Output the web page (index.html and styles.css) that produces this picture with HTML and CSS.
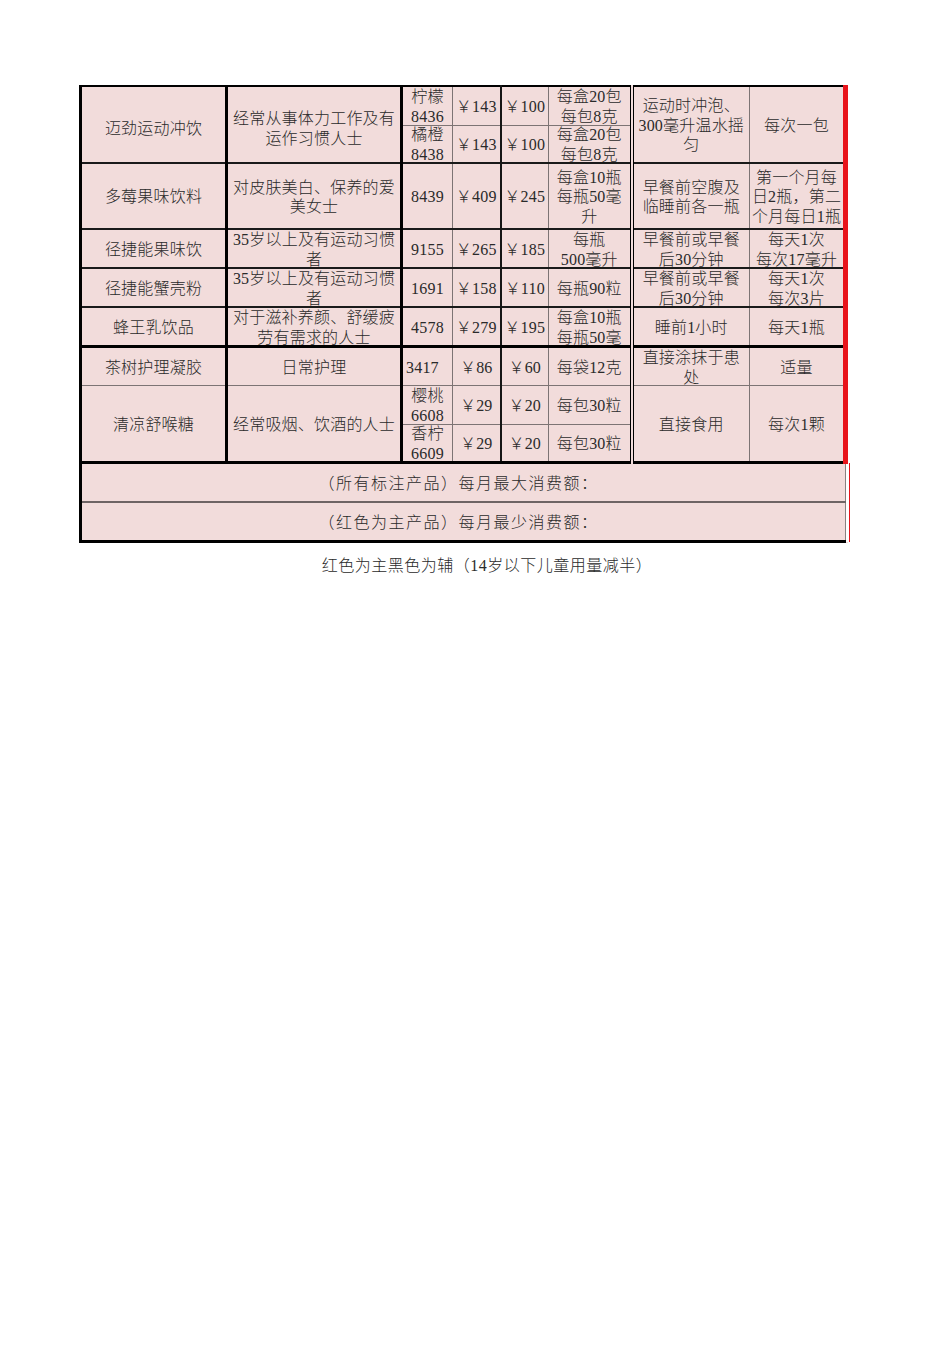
FILE: index.html
```html
<!DOCTYPE html>
<html lang="zh-CN">
<head>
<meta charset="utf-8">
<title>产品表</title>
<link rel="stylesheet" href="styles.css">
</head>
<body>
<div class="sheet">
  <table class="grid">
    <colgroup>
      <col class="w1"><col class="w2"><col class="w3"><col class="w4"><col class="w5"><col class="w6"><col class="w7"><col class="w8">
    </colgroup>
    <tbody>
      <tr class="r-first">
        <td rowspan="2" class="c1"><div class="cell h2 low">迈劲运动冲饮</div></td>
        <td rowspan="2" class="c2"><div class="cell h2 low">经常从事体力工作及有<br>运作习惯人士</div></td>
        <td class="c3"><div class="cell h1">柠檬<br>8436</div></td>
        <td class="c4"><div class="cell h1">￥143</div></td>
        <td class="c5"><div class="cell h1">￥100</div></td>
        <td class="c6"><div class="cell h1">每盒20包<br>每包8克</div></td>
        <td rowspan="2" class="c7"><div class="cell h2">运动时冲泡、<br>300毫升温水摇<br>匀</div></td>
        <td rowspan="2" class="c8"><div class="cell h2">每次一包</div></td>
      </tr>
      <tr class="r-sub">
        <td class="c3"><div class="cell h1b">橘橙<br>8438</div></td>
        <td class="c4"><div class="cell h1b">￥143</div></td>
        <td class="c5"><div class="cell h1b">￥100</div></td>
        <td class="c6"><div class="cell h1b">每盒20包<br>每包8克</div></td>
      </tr>
      <tr class="r-dark">
        <td class="c1"><div class="cell h3">多莓果味饮料</div></td>
        <td class="c2"><div class="cell h3">对皮肤美白、保养的爱<br>美女士</div></td>
        <td class="c3"><div class="cell h3">8439</div></td>
        <td class="c4"><div class="cell h3">￥409</div></td>
        <td class="c5"><div class="cell h3">￥245</div></td>
        <td class="c6"><div class="cell h3">每盒10瓶<br>每瓶50毫<br>升</div></td>
        <td class="c7"><div class="cell h3">早餐前空腹及<br>临睡前各一瓶</div></td>
        <td class="c8"><div class="cell h3">第一个月每<br>日2瓶，第二<br>个月每日1瓶</div></td>
      </tr>
      <tr class="r-dark">
        <td class="c1"><div class="cell h1">径捷能果味饮</div></td>
        <td class="c2"><div class="cell h1">35岁以上及有运动习惯<br>者</div></td>
        <td class="c3"><div class="cell h1">9155</div></td>
        <td class="c4"><div class="cell h1">￥265</div></td>
        <td class="c5"><div class="cell h1">￥185</div></td>
        <td class="c6"><div class="cell h1">每瓶<br>500毫升</div></td>
        <td class="c7"><div class="cell h1">早餐前或早餐<br>后30分钟</div></td>
        <td class="c8"><div class="cell h1">每天1次<br>每次17毫升</div></td>
      </tr>
      <tr class="r-dark">
        <td class="c1"><div class="cell h1">径捷能蟹壳粉</div></td>
        <td class="c2"><div class="cell h1">35岁以上及有运动习惯<br>者</div></td>
        <td class="c3"><div class="cell h1">1691</div></td>
        <td class="c4"><div class="cell h1">￥158</div></td>
        <td class="c5"><div class="cell h1">￥110</div></td>
        <td class="c6"><div class="cell h1">每瓶90粒</div></td>
        <td class="c7"><div class="cell h1">早餐前或早餐<br>后30分钟</div></td>
        <td class="c8"><div class="cell h1">每天1次<br>每次3片</div></td>
      </tr>
      <tr class="r-dark">
        <td class="c1"><div class="cell h1">蜂王乳饮品</div></td>
        <td class="c2"><div class="cell h1">对于滋补养颜、舒缓疲<br>劳有需求的人士</div></td>
        <td class="c3"><div class="cell h1">4578</div></td>
        <td class="c4"><div class="cell h1">￥279</div></td>
        <td class="c5"><div class="cell h1">￥195</div></td>
        <td class="c6"><div class="cell h1">每盒10瓶<br>每瓶50毫</div></td>
        <td class="c7"><div class="cell h1">睡前1小时</div></td>
        <td class="c8"><div class="cell h1">每天1瓶</div></td>
      </tr>
      <tr class="r-thick">
        <td class="c1"><div class="cell h1">茶树护理凝胶</div></td>
        <td class="c2"><div class="cell h1">日常护理</div></td>
        <td class="c3"><div class="cell h1 left">3417</div></td>
        <td class="c4"><div class="cell h1">￥86</div></td>
        <td class="c5"><div class="cell h1">￥60</div></td>
        <td class="c6"><div class="cell h1">每袋12克</div></td>
        <td class="c7"><div class="cell h1">直接涂抹于患<br>处</div></td>
        <td class="c8"><div class="cell h1">适量</div></td>
      </tr>
      <tr class="r-sub">
        <td rowspan="2" class="c1"><div class="cell h2">清凉舒喉糖</div></td>
        <td rowspan="2" class="c2"><div class="cell h2">经常吸烟、饮酒的人士</div></td>
        <td class="c3"><div class="cell h1">樱桃<br>6608</div></td>
        <td class="c4"><div class="cell h1">￥29</div></td>
        <td class="c5"><div class="cell h1">￥20</div></td>
        <td class="c6"><div class="cell h1">每包30粒</div></td>
        <td rowspan="2" class="c7"><div class="cell h2">直接食用</div></td>
        <td rowspan="2" class="c8"><div class="cell h2">每次1颗</div></td>
      </tr>
      <tr class="r-sub">
        <td class="c3"><div class="cell h1b">香柠<br>6609</div></td>
        <td class="c4"><div class="cell h1b">￥29</div></td>
        <td class="c5"><div class="cell h1b">￥20</div></td>
        <td class="c6"><div class="cell h1b">每包30粒</div></td>
      </tr>
      <tr class="r-total">
        <td colspan="8" class="sum"><div class="cell h1 wide">（所有标注产品）每月最大消费额：</div></td>
      </tr>
      <tr class="r-total2">
        <td colspan="8" class="sum"><div class="cell h1 wide">（红色为主产品）每月最少消费额：</div></td>
      </tr>
    </tbody>
  </table>
  <p class="note">红色为主黑色为辅（14岁以下儿童用量减半）</p>
</div>
</body>
</html>
```

FILE: styles.css
```css
html, body {
  margin: 0;
  padding: 0;
  background: #ffffff;
}

.sheet {
  padding: 85px 0 0 79px;
  font-family: "Liberation Serif", "Noto Sans CJK SC", serif;
  font-size: 16px;
  font-weight: 300;
  color: #2a2a2a;
  text-spacing-trim: space-all;
}

.grid {
  border-collapse: collapse;
  table-layout: fixed;
  background: #f2dcdb;
  border-left: 3px solid #000;
  border-top: 2px solid #000;
  border-bottom: 3px solid #000;
}

.w1 { width: 146px; }
.w2 { width: 175px; }
.w3 { width: 51px; }
.w4 { width: 48px; }
.w5 { width: 48px; }
.w6 { width: 83px; }
.w7 { width: 118px; }
.w8 { width: 96px; }

.grid td {
  padding: 0;
  border: 1px solid #7d7474;
  vertical-align: middle;
}

.cell {
  display: flex;
  align-items: center;
  justify-content: center;
  text-align: center;
  overflow: hidden;
  white-space: nowrap;
  line-height: 19.5px;
  letter-spacing: 0.2px;
  box-sizing: border-box;
  padding-top: 2px;
}

.h1 { height: 37px; }
.h1b { height: 36px; }
.h2 { height: 75px; }
.h3 { height: 64px; }

.low { padding-top: 8px; }

.left {
  justify-content: flex-start;
  padding-left: 3px;
}

.cell.wide {
  letter-spacing: 1.5px;
  padding-right: 10px;
}

/* vertical lines */
.grid td.c1 { border-left: 3px solid #000; border-right: 3px solid #000; }
.grid td.c2 { border-right: 3px solid #000; }
.grid td.c4 { border-right: 2px solid #151515; }
.grid td.c6 { border-right: 4px double #000; }
.grid td.c8 { border-right: 5px solid #e8141b; }
.grid td.sum {
  border-left: 3px solid #000;
  border-right: 1px solid #8a8080;
  box-shadow: 3px 0 0 #ffffff, 4px 0 0 #e8141b;
}

/* horizontal lines */
.grid tr.r-first > td { border-top: 2px solid #000; }
.grid tr.r-dark > td { border-top: 2px solid #1a1a1a; }
.grid tr.r-thick > td { border-top: 3px solid #000; }
.grid tr.r-total > td { border-top: 3px solid #000; }
.grid tr.r-total2 > td { border-top: 2px solid #6e6464; border-bottom: 3px solid #000; }

.note {
  margin: 13px 0 0 49px;
  width: 718px;
  text-align: center;
  letter-spacing: 0.5px;
  line-height: 20px;
}
```
